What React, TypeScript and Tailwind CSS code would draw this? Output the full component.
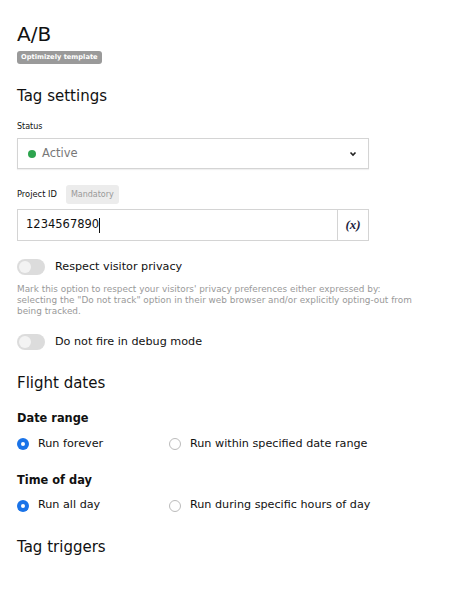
import React, { useState } from 'react';

const font = { fontFamily: '"DejaVu Sans", Verdana, sans-serif' };

const Toggle: React.FC<{ label: string }> = ({ label }) => {
  const [on, setOn] = useState(false);
  return (
    <label className="flex items-center gap-[10px] cursor-pointer" onClick={() => setOn(!on)}>
      <span className={`relative inline-block w-[28px] h-[16px] rounded-full ${on ? 'bg-[#1a73e8]' : 'bg-[#dcdcdc]'}`}>
        <span className={`absolute top-[2px] ${on ? 'left-[14px]' : 'left-[2px]'} w-[12px] h-[12px] rounded-full bg-[#f3f3f3]`} />
      </span>
      <span className="text-[11.2px] text-[#111]">{label}</span>
    </label>
  );
};

const Radio: React.FC<{ checked: boolean; label: string }> = ({ checked, label }) => (
  <div className="flex items-center gap-[9px]">
    {checked ? (
      <span className="w-[12px] h-[12px] rounded-full bg-[#1a73e8] flex items-center justify-center">
        <span className="w-[4px] h-[4px] rounded-full bg-white" />
      </span>
    ) : (
      <span className="w-[12px] h-[12px] rounded-full border border-[#bbb] bg-white" />
    )}
    <span className="text-[11.2px] text-[#111]">{label}</span>
  </div>
);

const App: React.FC = () => {
  return (
    <div className="bg-white w-[458px] min-h-[589px] px-[17px] pt-[22px] text-[#111]" style={font}>
      <h1 className="text-[20px] leading-[24px] text-[#111]">A/B</h1>
      <div className="block w-fit mt-[5px] bg-[#9a9a9a] text-white text-[6.7px] font-bold leading-[13px] px-[4px] rounded-[3px]">
        Optimizely template
      </div>

      <h2 className="mt-[22px] text-[15px] leading-[20px]">Tag settings</h2>

      <div className="mt-[15px] text-[8px] leading-[12px]">Status</div>
      <div className="mt-[5px] w-[352px] h-[31px] border border-[#d4d4d4] shadow-[0_1px_1px_rgba(0,0,0,0.06)] flex items-center px-[10px]">
        <span className="w-[8px] h-[8px] rounded-full bg-[#2da44e]" />
        <span className="ml-[6px] text-[11.5px] text-[#777]">Active</span>
        <svg className="ml-auto mr-[1px]" width="8" height="6" viewBox="0 0 8 6">
          <path d="M1.5 1.5 L4 4 L6.5 1.5" fill="none" stroke="#222" strokeWidth="1.6" />
        </svg>
      </div>

      <div className="mt-[16px] flex items-center gap-[9px]">
        <span className="text-[8.3px] text-[#111]">Project ID</span>
        <span className="bg-[#ececec] text-[#999] text-[8px] leading-[19px] px-[5px] rounded-[3px]">Mandatory</span>
      </div>
      <div className="mt-[5px] w-[352px] h-[32px] border border-[#d4d4d4] flex">
        <div className="flex-1 flex items-center pl-[8px] text-[11.5px] text-[#111]">
          1234567890<span className="inline-block w-[1px] h-[15px] bg-[#111]" />
        </div>
        <div className="w-[31px] border-l border-[#d4d4d4] flex items-center justify-center">
          <span className="italic font-bold text-[13px] text-[#1c2340]" style={{ fontFamily: '"Liberation Serif", serif' }}>
            (x)
          </span>
        </div>
      </div>

      <div className="mt-[18px]">
        <Toggle label="Respect visitor privacy" />
      </div>
      <p className="mt-[8px] text-[8.9px] leading-[11px] text-[#999] w-[400px]">
        Mark this option to respect your visitors' privacy preferences either expressed by:
        selecting the "Do not track" option in their web browser and/or explicitly opting-out from
        being tracked.
      </p>
      <div className="mt-[17px]">
        <Toggle label="Do not fire in debug mode" />
      </div>

      <h2 className="mt-[22px] text-[15px] leading-[20px]">Flight dates</h2>

      <div className="mt-[17px] text-[11.4px] font-bold leading-[16px]">Date range</div>
      <div className="mt-[10px] flex">
        <div className="w-[152px]"><Radio checked label="Run forever" /></div>
        <Radio checked={false} label="Run within specified date range" />
      </div>

      <div className="mt-[20px] text-[11.4px] font-bold leading-[16px]">Time of day</div>
      <div className="mt-[9px] flex">
        <div className="w-[152px]"><Radio checked label="Run all day" /></div>
        <Radio checked={false} label="Run during specific hours of day" />
      </div>

      <h2 className="mt-[23px] text-[15px] leading-[20px]">Tag triggers</h2>
    </div>
  );
};

export default App;
